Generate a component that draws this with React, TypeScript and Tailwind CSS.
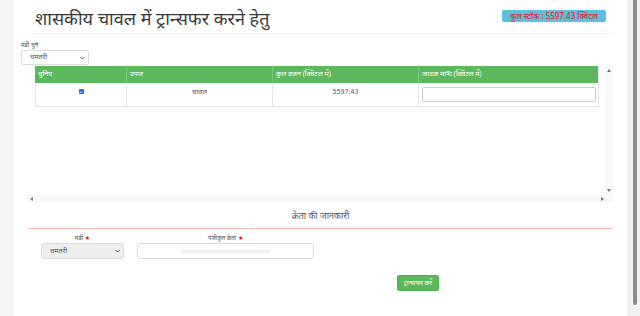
import React from "react";

const headers = ["चुनिए", "उपज", "कुल वजन (क्विंटल में)", "जावक मात्रा (क्विंटल में)"];

const font = { fontFamily: '"Noto Sans", "Noto Sans Devanagari", "DejaVu Sans", sans-serif' };

export default function App() {
  return (
    <div className="flex w-[640px] h-[316px] overflow-hidden bg-white text-[#333]" style={font}>
      <div className="w-[14px] shrink-0 bg-[#f5f5f5]" />

      <div className="w-[613px] shrink-0 flex flex-col">
        {/* title row */}
        <div className="h-[33px] flex items-start justify-between pl-[21px] pr-[21px]">
          <h1 className="text-[18px] leading-[22px] mt-[7px] font-normal text-[#3a3a3a]">
            शासकीय चावल में ट्रान्सफर करने हेतु
          </h1>
          <span className="mt-[10px] h-[12px] w-[104px] flex items-center justify-center rounded-[2px] bg-[#5bc0de] text-[8px] leading-none text-[#f00]">
            कुल स्टॉक : 5597.43 क्विंटल
          </span>
        </div>
        <div className="mx-[14px] h-px bg-[#f3f3f3]" />

        {/* mandi select */}
        <div className="pl-[7px] pt-[8px] h-[32px]">
          <label className="block text-[6px] leading-[7px] text-[#555]">मंडी चुनें</label>
          <div className="mt-[1px] w-[68px] h-[15px] border border-[#ddd] rounded-[2px] flex items-center justify-between pl-[8px] pr-[3px] text-[7px] text-[#555]">
            <span>धमतरी</span>
            <svg width="5" height="4" viewBox="0 0 10 6"><path d="M1 1l4 4 4-4" stroke="#333" strokeWidth="1.6" fill="none" /></svg>
          </div>
        </div>

        {/* scroll box */}
        <div className="ml-[14px] w-[585px] h-[136px] flex flex-col">
          <div className="flex h-[129px]">
            <div className="w-[577px] pl-[7px]">
              <div className="w-[564px] border-r border-b border-[#e6e6e6]">
                <div className="grid grid-cols-[91px_146px_146px_181px] h-[17px] bg-[#5cb85c] text-white text-[7px] leading-none">
                  {headers.map((h, i) => (
                    <div key={i} className={"pl-[3px] pt-[4px] " + (i > 0 ? "border-l border-[#7ec87e]" : "")}>{h}</div>
                  ))}
                </div>
                <div className="grid grid-cols-[91px_146px_146px_181px] h-[23px] text-[7px] text-[#555]">
                  <div className="flex justify-center pt-[6px] border-l border-[#e6e6e6]">
                    <span className="w-[5px] h-[5px] rounded-[1px] bg-[#1a73e8] flex items-center justify-center">
                      <svg width="4" height="4" viewBox="0 0 8 8"><path d="M1.5 4.2l1.8 1.8 3.2-3.8" stroke="white" strokeWidth="1.4" fill="none" /></svg>
                    </span>
                  </div>
                  <div className="text-center pt-[4px] border-l border-[#e6e6e6]">चावल</div>
                  <div className="text-center pt-[4px] border-l border-[#e6e6e6]">5597.43</div>
                  <div className="border-l border-[#e6e6e6] pt-[4px] pl-[3px]">
                    <div className="w-[174px] h-[15px] border border-[#ccc] rounded-[2px] bg-white" />
                  </div>
                </div>
              </div>
            </div>
            <div className="w-[8px] bg-[#f8f8f8] flex flex-col items-center justify-between py-[3px]">
              <svg width="4" height="3" viewBox="0 0 4 3"><path d="M2 0l2 3H0z" fill="#777" /></svg>
              <svg width="4" height="3" viewBox="0 0 4 3"><path d="M0 0h4L2 3z" fill="#777" /></svg>
            </div>
          </div>
          <div className="h-[7px] bg-[#f8f8f8] flex items-center justify-between pl-[2px] pr-[9px]">
            <svg width="3" height="4" viewBox="0 0 3 4"><path d="M0 2l3-2v4z" fill="#777" /></svg>
            <svg width="3" height="4" viewBox="0 0 3 4"><path d="M3 2L0 0v4z" fill="#777" /></svg>
          </div>
        </div>

        {/* buyer info */}
        <div className="ml-[14px] w-[585px] h-[26px] flex items-center justify-center pt-[1px] text-[9px] text-[#555]">
          क्रेता की जानकारी
        </div>
        <div className="mx-[14px] h-px bg-[#f6b9b3]" />

        <div className="flex pl-[27px] pt-[5px] gap-[13px]">
          <div className="w-[83px] flex flex-col items-center">
            <label className="h-[9px] text-[6px] leading-[8px] text-[#555]">
              मंडी <span className="text-[#f00]">★</span>
            </label>
            <div className="w-[83px] h-[16px] rounded-[3px] border border-[#ddd] bg-[#eee] flex items-center justify-between pl-[8px] pr-[3px] text-[7px] text-[#555]">
              <span>धमतरी</span>
              <svg width="5" height="4" viewBox="0 0 10 6"><path d="M1 1l4 4 4-4" stroke="#333" strokeWidth="1.6" fill="none" /></svg>
            </div>
          </div>
          <div className="w-[177px] flex flex-col items-center">
            <label className="h-[9px] text-[6px] leading-[8px] text-[#555]">
              पंजीकृत क्रेता <span className="text-[#f00]">★</span>
            </label>
            <div className="w-[177px] h-[16px] rounded-[3px] border border-[#ddd] bg-white flex items-center justify-center">
              <span className="w-[90px] h-[3px] rounded-full bg-[#e8e8e8] blur-[1px]" />
            </div>
          </div>
        </div>

        <div className="pl-[383px] pt-[8px]">
          <button className="w-[42px] h-[16px] rounded-[2px] bg-[#5cb85c] border border-[#4cae4c] text-white text-[6.5px] leading-none">
            ट्रान्सफर करें
          </button>
        </div>
      </div>

      <div className="w-[13px] shrink-0 bg-[#f1f1f1] flex justify-center pl-[2px]">
        <div className="w-[4px] h-[305px] rounded-b-[2px] bg-[#8a8a8a]" />
      </div>
    </div>
  );
}
